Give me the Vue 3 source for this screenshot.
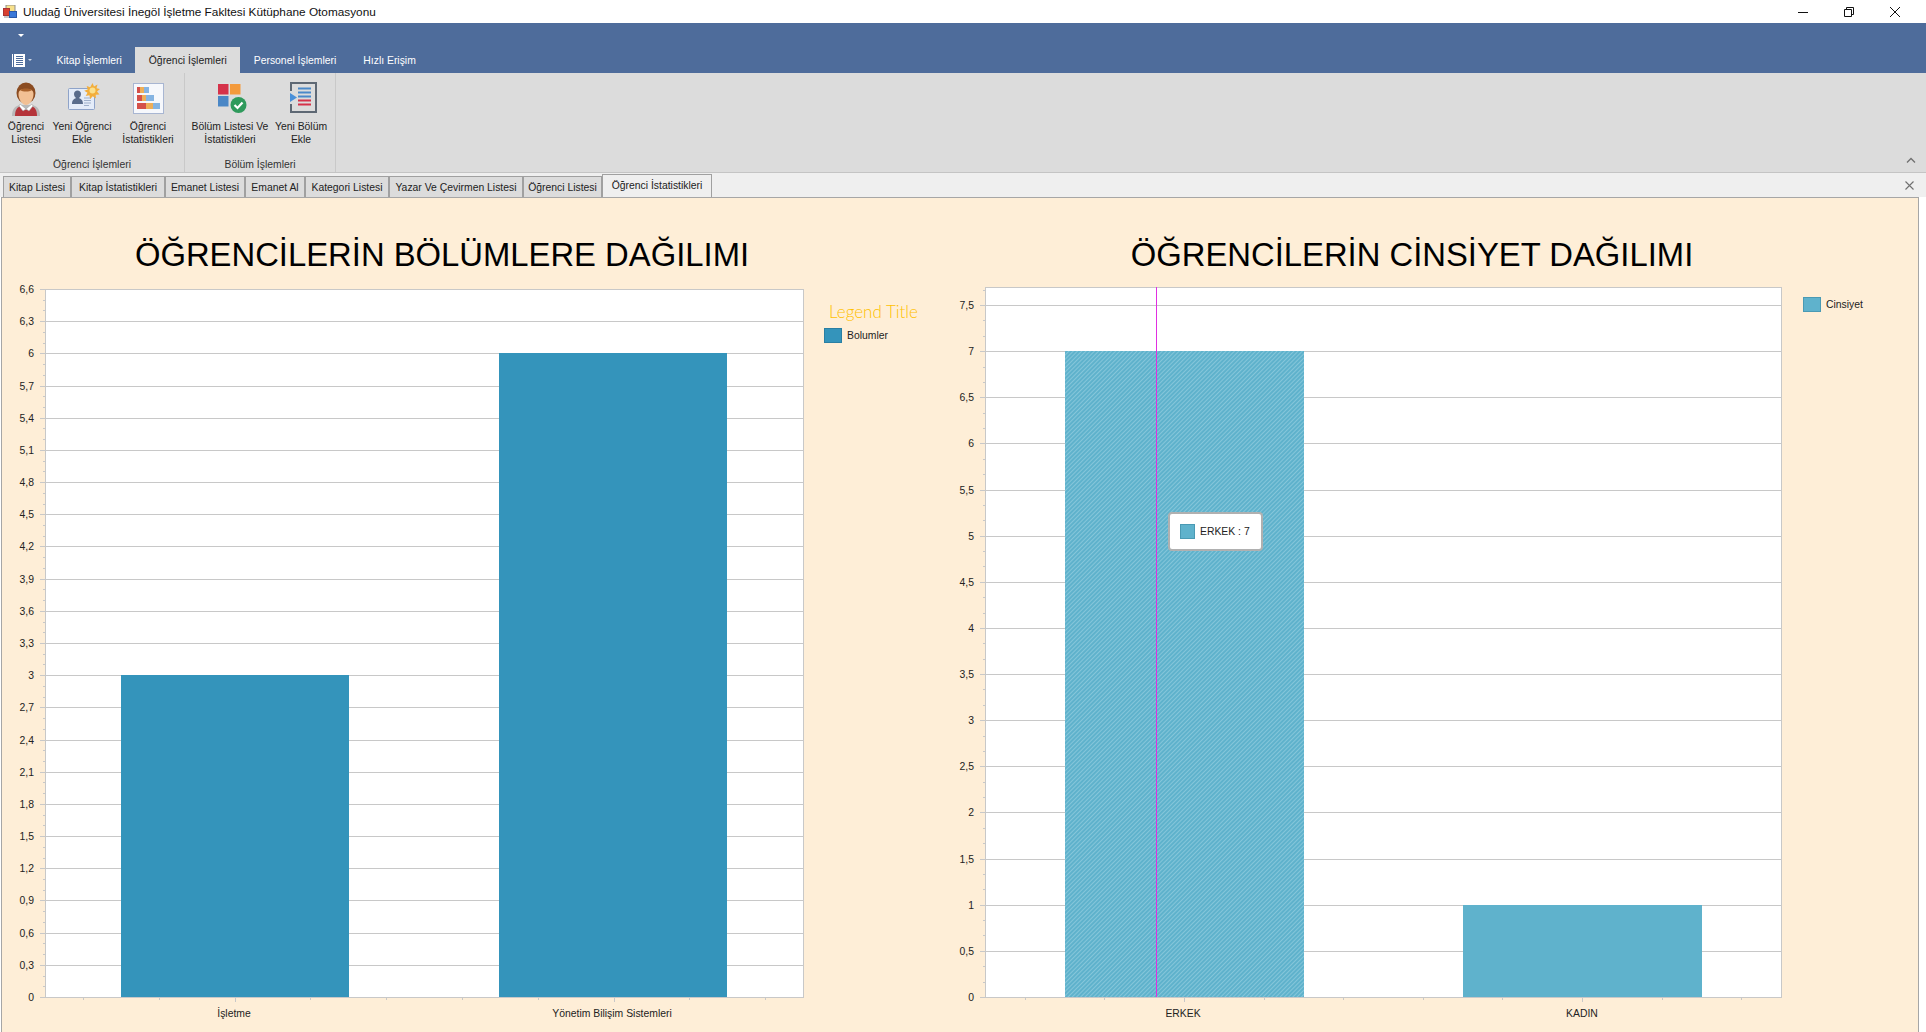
<template>
  <div class="app">
    <div class="titlebar">
      <svg class="app-icon" width="14" height="14" viewBox="0 0 14 14">
        <rect x="3" y="0" width="9" height="8" fill="#f7e08a" stroke="#8f8f8f" />
        <rect x="0.5" y="3.5" width="6" height="7" fill="#d8402f" stroke="#a33" />
        <rect x="6.5" y="6.5" width="7" height="6" fill="#3a78d8" stroke="#2a58a8" />
        <rect x="1" y="11" width="5" height="2" fill="#c9c9c9" />
      </svg>
      <span class="title-text">Uludağ Üniversitesi İnegöl İşletme Fakltesi Kütüphane Otomasyonu</span>
      <div class="win-buttons">
        <svg width="12" height="12" viewBox="0 0 12 12"><path d="M1 6.500h10" stroke="#111" fill="none" /></svg>
        <svg width="12" height="12" viewBox="0 0 12 12"><path d="M1.500 3.500h7v7h-7zM3.500 3.500v-2h7v7h-2" stroke="#111" fill="none" /></svg>
        <svg width="12" height="12" viewBox="0 0 12 12"><path d="M1 1l10 10M11 1L1 11" stroke="#111" fill="none" /></svg>
      </div>
    </div>

    <div class="ribbon-head">
      <div class="quick-bar"><span class="quick-arrow"></span></div>
      <div class="ribbon-tabs">
        <div class="menu-btn">
          <svg width="13" height="13" viewBox="0 0 13 13">
            <rect x="0" y="0" width="13" height="13" fill="#fff" />
            <path d="M1.500 0v13" stroke="#4e6c9b" />
            <path d="M4 2.500h7M4 4.500h7M4 6.500h7M4 8.500h7M4 10.500h7" stroke="#4e6c9b" />
          </svg>
          <span class="menu-arrow"></span>
        </div>
        <div v-for="t in ribbonTabs" :key="t" class="ribbon-tab" :class="{ active: t === 'Öğrenci İşlemleri' }">{{ t }}</div>
      </div>
    </div>

    <div class="ribbon-body">
      <div class="group group-students">
        <div class="group-items">
          <div class="rb-button btn-a">
            <svg width="30" height="36" viewBox="0 0 30 36">
              <path d="M1 34c0-7 3-10 8-11h12c5 1 8 4 8 11z" fill="#b9b9b9" />
              <path d="M4 34c0-6 2-9 6-10l5 4 5-4c4 1 6 4 6 10z" fill="#b5343a" />
              <path d="M9 22l6 5 6-5 1 2-4 5-3-2-3 2-4-5z" fill="#fff" stroke="#9a9a9a" stroke-width=".5" />
              <ellipse cx="15" cy="11" rx="9.500" ry="10.500" fill="#8b4c22" />
              <path d="M7.500 12c0-4 3-5 7.500-5s7.500 1 7.500 5c0 6-4 11-7.500 11S7.500 18 7.500 12z" fill="#f2c094" />
              <path d="M9 8c3 2 9 2 12 0-2-2-10-2-12 0z" fill="#a9622c" />
            </svg>
          </div>
          <div class="rb-button btn-b">
            <svg width="32" height="30" viewBox="0 0 32 30">
              <rect x="0.500" y="5.500" width="26" height="21" rx="1" fill="#e4ecf9" stroke="#8ea3c9" />
              <path d="M4 21c0-4 2-5 4-6-1-1-2-2-2-4 0-2 1.500-3.500 3.500-3.500S13 9 13 11c0 2-1 3-2 4 2 1 4 2 4 6z" fill="#596c8c" />
              <path d="M16 15h7M16 17.500h7M16 20h7M16 22.500h5" stroke="#9fb0cb" />
              <path d="M24.500 0l1.500 3.500 3.500-2-1 3.700 3.500.8-3 2.500 2.500 3-3.800.2.200 3.800-3.200-2.300-2.500 2.800-.8-3.700-3.700.7 1.800-3.300-3.300-2 3.500-1.200-1-3.600 3.500 1.400z" fill="#f3ae3b" />
              <circle cx="24.500" cy="7.500" r="3" fill="#fbe08c" />
            </svg>
          </div>
          <div class="rb-button btn-c">
            <svg width="31" height="31" viewBox="0 0 31 31">
              <rect x="0.500" y="0.500" width="30" height="30" fill="#f6f8fc" stroke="#a8b6d2" />
              <rect x="4" y="4" width="3" height="6" fill="#d4504a" /><rect x="7" y="4" width="4" height="6" fill="#eeae58" /><rect x="11" y="4" width="5" height="6" fill="#85b4e2" />
              <rect x="4" y="12" width="5" height="6" fill="#d4504a" /><rect x="9" y="12" width="4" height="6" fill="#eeae58" /><rect x="13" y="12" width="8" height="6" fill="#85b4e2" />
              <rect x="4" y="20" width="9" height="6" fill="#d4504a" /><rect x="13" y="20" width="7" height="6" fill="#eeae58" /><rect x="20" y="20" width="7" height="6" fill="#85b4e2" />
            </svg>
          </div>
        </div>
        <div class="labels">
          <span class="rb-label lab-a">Öğrenci<br />Listesi</span>
          <span class="rb-label lab-b">Yeni Öğrenci<br />Ekle</span>
          <span class="rb-label lab-c">Öğrenci<br />İstatistikleri</span>
        </div>
        <div class="group-title">Öğrenci İşlemleri</div>
      </div>
      <div class="group group-depts">
        <div class="group-items">
          <div class="rb-button btn-d">
            <svg width="29" height="30" viewBox="0 0 29 30">
              <rect x="0" y="0" width="10.500" height="10.500" fill="#d5324a" />
              <rect x="12" y="0" width="10.500" height="10.500" fill="#f39a3c" />
              <rect x="0" y="12" width="10.500" height="10.500" fill="#4a87c6" />
              <circle cx="20.500" cy="21" r="9" fill="#dcdcdc" />
              <circle cx="20.500" cy="21" r="8" fill="#2f9a5c" />
              <path d="M16.500 21l3 3 5-5.500" stroke="#fff" stroke-width="2.200" fill="none" />
            </svg>
          </div>
          <div class="rb-button btn-e">
            <svg width="27" height="31" viewBox="0 0 27 31">
              <path d="M1 9V1h25v29H1v-8" stroke="#5e6874" stroke-width="2" fill="none" />
              <path d="M0 11l7 4.500L0 20z" fill="#4a90d9" />
              <path d="M8 6.500h13M8 10.500h13M8 14.500h13" stroke="#4a89c9" stroke-width="2" />
              <path d="M8 18.500h13M8 22.500h13" stroke="#d5324a" stroke-width="2" />
            </svg>
          </div>
        </div>
        <div class="labels">
          <span class="rb-label lab-d">Bölüm Listesi Ve<br />İstatistikleri</span>
          <span class="rb-label lab-e">Yeni Bölüm<br />Ekle</span>
        </div>
        <div class="group-title">Bölüm İşlemleri</div>
      </div>
      <svg class="collapse" width="10" height="6" viewBox="0 0 10 6"><path d="M1 5.500l4-4 4 4" stroke="#707070" stroke-width="1.300" fill="none" /></svg>
    </div>

    <div class="tabstrip">
      <div v-for="d in docTabs" :key="d.name" class="doc-tab" :class="{ active: d.active }" :style="{ width: d.w + 'px' }">{{ d.name }}</div>
      <svg class="tab-close" width="9" height="9" viewBox="0 0 9 9"><path d="M.5.500l8 8M8.500.500l-8 8" stroke="#707070" stroke-width="1.100" fill="none" /></svg>
    </div>

    <div class="content">
      <section v-for="c in charts" :key="c.id" class="chart" :class="c.id">
        <h1 class="chart-title">{{ c.title }}</h1>
        <div class="chart-row">
          <svg :width="c.svgW" height="752" class="plot">
            <defs>
              <pattern id="hatch" width="3" height="3" patternUnits="userSpaceOnUse" patternTransform="rotate(45)">
                <rect width="3" height="3" fill="#5fb2cc" />
                <rect width="1" height="3" fill="#85c6da" />
              </pattern>
            </defs>
            <rect :x="c.x0" :y="c.top" :width="c.w" :height="c.bottom - c.top" fill="#fff" />
            <g stroke="#c8c8c8" fill="none">
              <path v-for="(y, i) in c.gridY" :key="'g' + i" :d="`M${c.x0 - 5} ${y}H${c.x0 + c.w}`" />
              <path v-for="(y, i) in c.minorY" :key="'m' + i" :d="`M${c.x0 - 2} ${y}H${c.x0}`" />
              <path v-for="(t, i) in c.ticksX" :key="'t' + i" :d="`M${t.x} ${c.bottom}v${t.major ? 5 : 3}`" />
              <rect :x="c.x0 + 0.5" :y="c.top + 0.5" :width="c.w" :height="c.bottom - c.top" />
            </g>
            <rect v-for="b in c.bars" :key="b.label" :x="b.x" :y="b.y" :width="b.w" :height="c.bottom - b.y" :fill="b.fill" />
            <path v-if="c.cross" :d="`M${c.cross + 0.5} ${c.top}V${c.bottom}`" stroke="#e02fe0" />
            <text v-for="l in c.labelsY" :key="l.text" :x="c.x0 - 11" :y="l.y + 4" text-anchor="end" class="axis-text">{{ l.text }}</text>
            <text v-for="b in c.bars" :key="'x' + b.label" :x="b.cx" y="737" text-anchor="middle" class="axis-text">{{ b.label }}</text>
          </svg>
          <div class="legend">
            <div v-if="c.legendTitle" class="legend-title">{{ c.legendTitle }}</div>
            <div class="legend-item">
              <span class="swatch" :style="{ background: c.swatch, borderColor: c.swatchBorder }"></span>
              <span>{{ c.series }}</span>
            </div>
          </div>
        </div>
        <div v-if="c.tooltip" class="tooltip">
          <span class="swatch small"></span>
          <span>{{ c.tooltip }}</span>
        </div>
      </section>
    </div>
  </div>
</template>

<script setup>
const ribbonTabs = ['Kitap İşlemleri', 'Öğrenci İşlemleri', 'Personel İşlemleri', 'Hızlı Erişim']

const docTabs = [
  { name: 'Kitap Listesi', w: 68 },
  { name: 'Kitap İstatistikleri', w: 94 },
  { name: 'Emanet Listesi', w: 80 },
  { name: 'Emanet Al', w: 60 },
  { name: 'Kategori Listesi', w: 84 },
  { name: 'Yazar Ve Çevirmen Listesi', w: 134 },
  { name: 'Öğrenci Listesi', w: 79 },
  { name: 'Öğrenci İstatistikleri', w: 110, active: true }
]

// every chart is built from its axis range, the svg starts 280px down the page
const buildChart = (o) => {
  const unit = (o.bottom - o.zeroTop) / o.zeroTopValue
  const toY = (v) => Math.round(o.bottom - v * unit)
  const gridY = []
  const minorY = []
  const labelsY = []
  const count = Math.round(o.maxTick / o.step)
  for (let i = 0; i <= count; i++) {
    const v = i * o.step
    gridY.push(toY(v) + 0.5)
    labelsY.push({ y: toY(v), text: String(Math.round(v * 10) / 10).replace('.', ',') })
    for (let s = 1; s < 3; s++) {
      const my = Math.round(o.bottom - (v + (s * o.step) / 3) * unit)
      if (my > o.top) minorY.push(my + 0.5)
    }
  }
  const ticksX = []
  const gap = o.w / 10
  for (let i = 0; i < 10; i++) {
    ticksX.push({ x: Math.round(o.x0 + gap / 2 + i * gap) + 0.5, major: i === 2 || i === 7 })
  }
  const bars = o.bars.map((b) => ({ ...b, y: toY(b.value) }))
  return { ...o, gridY, minorY, labelsY, ticksX, bars }
}

const charts = [
  buildChart({
    id: 'left',
    title: 'ÖĞRENCİLERİN BÖLÜMLERE DAĞILIMI',
    svgW: 820,
    x0: 43,
    w: 758,
    top: 9,
    bottom: 717,
    zeroTop: 9,
    zeroTopValue: 6.6,
    maxTick: 6.6,
    step: 0.3,
    bars: [
      { label: 'İşletme', value: 3, x: 119, w: 228, cx: 232, fill: '#3494bb' },
      { label: 'Yönetim Bilişim Sistemleri', value: 6, x: 497, w: 228, cx: 610, fill: '#3494bb' }
    ],
    legendTitle: 'Legend Title',
    series: 'Bolumler',
    swatch: '#3494bb',
    swatchBorder: '#2a7fa3'
  }),
  buildChart({
    id: 'right',
    title: 'ÖĞRENCİLERİN CİNSİYET DAĞILIMI',
    svgW: 850,
    x0: 45,
    w: 796,
    top: 7,
    bottom: 717,
    zeroTop: 25,
    zeroTopValue: 7.5,
    maxTick: 7.5,
    step: 0.5,
    cross: 216,
    bars: [
      { label: 'ERKEK', value: 7, x: 125, w: 239, cx: 243, fill: 'url(#hatch)' },
      { label: 'KADIN', value: 1, x: 523, w: 239, cx: 642, fill: '#5fb2cc' }
    ],
    series: 'Cinsiyet',
    swatch: '#5fb2cc',
    swatchBorder: '#4a9ab4',
    tooltip: 'ERKEK : 7'
  })
]
</script>

<style scoped>
.app {
  width: 1926px;
  height: 1032px;
  display: flex;
  flex-direction: column;
  overflow: hidden;
  background: #fff;
  font-family: "Liberation Sans", Arial, sans-serif;
  font-size: 10.4px;
  color: #222;
}
.titlebar {
  height: 23px;
  display: flex;
  align-items: center;
  padding-left: 3px;
  flex: none;
}
.app-icon {
  margin-right: 6px;
}
.title-text {
  font-size: 11.8px;
  color: #111;
}
.win-buttons {
  margin-left: auto;
  display: flex;
  gap: 34px;
  padding-right: 25px;
}
.ribbon-head {
  height: 50px;
  flex: none;
  background: #4e6c9b;
}
.quick-bar {
  height: 24px;
  padding: 11px 0 0 18px;
  box-sizing: border-box;
}
.quick-arrow {
  display: block;
  width: 0;
  height: 0;
  border-left: 3px solid transparent;
  border-right: 3px solid transparent;
  border-top: 3px solid #fff;
}
.ribbon-tabs {
  height: 26px;
  display: flex;
  align-items: stretch;
}
.menu-btn {
  width: 43px;
  padding-left: 12px;
  box-sizing: border-box;
  display: flex;
  align-items: center;
  gap: 3px;
}
.menu-arrow {
  width: 0;
  height: 0;
  border-left: 2px solid transparent;
  border-right: 2px solid transparent;
  border-top: 2px solid #cfd8e6;
}
.ribbon-tab {
  padding: 0 13.5px;
  display: flex;
  align-items: center;
  color: #fff;
  white-space: nowrap;
}
.ribbon-tab.active {
  background: #dcdcdc;
  color: #222;
}
.ribbon-body {
  height: 100px;
  flex: none;
  background: #dcdcdc;
  border-bottom: 1px solid #c4c4c4;
  box-sizing: border-box;
  display: flex;
  position: relative;
}
.group {
  height: 99px;
  border-right: 1px solid #c9c9c9;
  box-sizing: content-box;
  display: flex;
  flex-direction: column;
  align-items: stretch;
  text-align: center;
}
.group-students {
  width: 184px;
}
.group-depts {
  width: 150px;
}
.group-items {
  height: 47px;
  position: relative;
  display: flex;
}
.rb-button {
  padding-top: 9px;
  line-height: 0;
}
.btn-a { margin-left: 11px; }
.btn-b { margin-left: 27px; padding-top: 10px; }
.btn-c { margin-left: 33px; padding-top: 10px; }
.btn-d { margin-left: 33px; padding-top: 11px; }
.btn-e { margin-left: 43px; padding-top: 9px; }
.labels {
  display: flex;
  height: 37px;
  line-height: 13px;
  box-sizing: border-box;
}
.rb-label {
  display: block;
  text-align: center;
  white-space: nowrap;
  flex: none;
}
.lab-a { width: 38px; margin-left: 7px; }
.lab-b { width: 60px; margin-left: 7px; }
.lab-c { width: 56px; margin-left: 8px; }
.lab-d { width: 78px; margin-left: 6px; }
.lab-e { width: 54px; margin-left: 5px; }
.group-title {
  height: 15px;
  line-height: 16px;
  color: #333;
}
.collapse {
  position: absolute;
  right: 10px;
  top: 84px;
}
.tabstrip {
  height: 24px;
  flex: none;
  background: #efefef;
  display: flex;
  align-items: flex-end;
  padding-left: 3px;
  position: relative;
}
.doc-tab {
  height: 21px;
  box-sizing: border-box;
  background: #dcdcdc;
  border: 1px solid #a0a0a0;
  border-bottom: none;
  text-align: center;
  line-height: 21px;
  white-space: nowrap;
}
.doc-tab.active {
  height: 23px;
  background: #efefef;
  line-height: 22px;
}
.tab-close {
  position: absolute;
  right: 12px;
  top: 8px;
}
.content {
  flex: 1;
  width: 1918px;
  margin-left: 1px;
  box-sizing: border-box;
  border: 1px solid #a6a6a6;
  border-bottom: none;
  background: #feeed7;
  display: flex;
}
.chart {
  flex: none;
  position: relative;
}
.chart.left { width: 938px; }
.chart.right { width: 978px; }
.chart-title {
  height: 42px;
  padding-top: 40px;
  margin: 0;
  font: 400 32.8px "Liberation Sans", Arial, sans-serif;
  color: #000;
  line-height: 34px;
  text-align: center;
  white-space: nowrap;
}
.left .chart-title { width: 880px; }
.right .chart-title { width: 944px; }
.chart-row {
  display: flex;
}
.plot {
  display: block;
  flex: none;
}
.axis-text {
  font-size: 10.4px;
  fill: #222;
}
.legend {
  display: flex;
  flex-direction: column;
  gap: 6px;
}
.left .legend { padding: 21px 0 0 2px; }
.right .legend { padding: 17px 0 0 13px; }
.legend-title {
  font: 300 17px Lato, "Open Sans", sans-serif;
  color: #ffc000;
  padding-left: 5px;
  white-space: nowrap;
}
.legend-item {
  display: flex;
  align-items: center;
  gap: 5px;
}
.swatch {
  width: 18px;
  height: 15px;
  box-sizing: border-box;
  border: 1px solid;
}
.swatch.small {
  width: 15px;
  height: 15px;
  background: #5fb2cc;
  border-color: #4a9ab4;
}
.tooltip {
  position: absolute;
  left: 228px;
  top: 314px;
  width: 95px;
  height: 39px;
  box-sizing: border-box;
  background: #fff;
  border: 2px solid #b0b0b0;
  border-radius: 4px;
  display: flex;
  align-items: center;
  gap: 5px;
  padding-left: 10px;
}
</style>

<style>
html, body {
  margin: 0;
  padding: 0;
}
</style>
